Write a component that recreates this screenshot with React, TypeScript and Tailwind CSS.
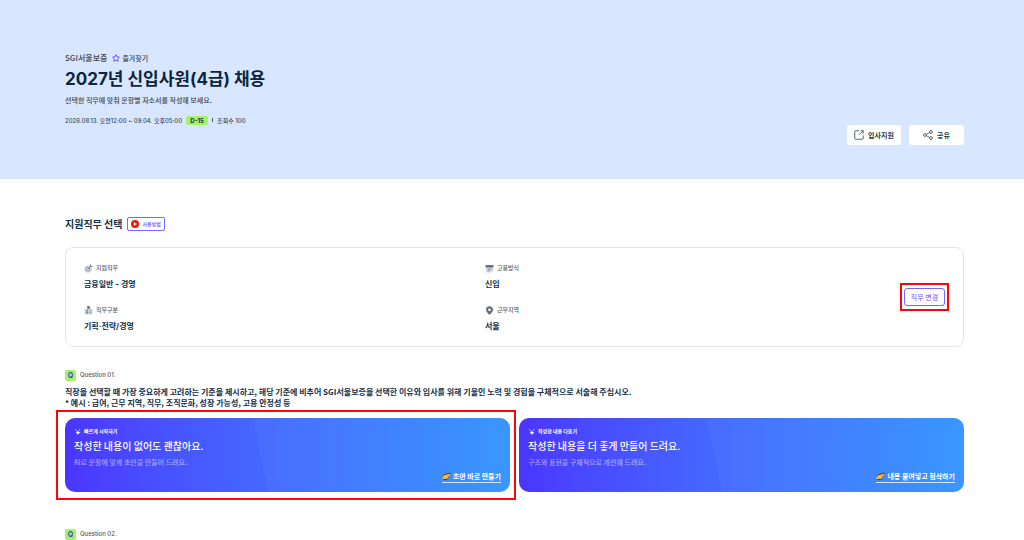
import type { ReactNode } from "react";

function StarIcon() {
  return (
    <svg className="size-2" viewBox="0 0 24 24" fill="none" stroke="#6a55ff" strokeWidth="3" strokeLinejoin="round" aria-hidden="true">
      <path d="M12 2l3.1 6.6 7.1.9-5.2 5 1.3 7.2L12 18.200l-6.300 3.500 1.300-7.200-5.200-5 7.100-.9z" />
    </svg>
  );
}

function OpenIcon() {
  return (
    <svg className="size-[10px]" viewBox="0 0 20 20" fill="none" stroke="#444b55" strokeWidth="1.7" aria-hidden="true">
      <path d="M10 1.500H3.500a2 2 0 0 0-2 2v13a2 2 0 0 0 2 2h13a2 2 0 0 0 2-2V11M13 1.500h5.500V7M18 2l-7.500 7.500" />
    </svg>
  );
}

function ShareIcon() {
  return (
    <svg className="size-[10px]" viewBox="0 0 20 20" fill="none" stroke="#444b55" strokeWidth="1.7" aria-hidden="true">
      <circle cx="3.800" cy="10" r="2.800" />
      <circle cx="16" cy="3.800" r="2.800" />
      <circle cx="16" cy="16.200" r="2.800" />
      <path d="M6.300 8.800l7.200-3.700M6.300 11.200l7.200 3.700" />
    </svg>
  );
}

function PlayIcon() {
  return (
    <svg className="size-2" viewBox="0 0 16 16" aria-hidden="true">
      <circle cx="8" cy="8" r="8" fill="#f90f12" />
      <path d="M5.500 4l6.500 4-6.500 4z" fill="#fff" />
    </svg>
  );
}

function TargetIcon() {
  return (
    <svg className="size-[9px]" viewBox="0 0 18 18" fill="none" aria-hidden="true">
      <circle cx="8" cy="10" r="7.500" fill="#d5d8df" />
      <circle cx="8" cy="10" r="4" stroke="#8b909d" strokeWidth="1.800" />
      <path d="M8 10l6-6M13 1v4h4" stroke="#737987" strokeWidth="2" />
    </svg>
  );
}

function BadgeIcon() {
  return (
    <svg className="size-[9px]" viewBox="0 0 18 18" aria-hidden="true">
      <path d="M1 5h16v12H1z" fill="#d5d8df" />
      <path d="M6.500 0h5v6h-5z" fill="#6b7280" />
      <circle cx="6" cy="9.500" r="2" fill="#7b8190" />
      <path d="M3 15c0-4 6-4 6 0zM11 9h4v1.500h-4zM11 13h4v1.500h-4z" fill="#7b8190" />
    </svg>
  );
}

function PaperIcon() {
  return (
    <svg className="size-[9px]" viewBox="0 0 18 18" aria-hidden="true">
      <path d="M2 5h14v8l-4 4H2z" fill="#d5d8df" />
      <path d="M1 2h16v5H1z" fill="#6b7280" />
      <path d="M5 9.500h8V11H5zM5 13h5v1.500H5z" fill="#7b8190" />
    </svg>
  );
}

function PinIcon() {
  return (
    <svg className="size-[9px]" viewBox="0 0 18 18" aria-hidden="true">
      <path fillRule="evenodd" d="M9 .5a7 7 0 0 1 7 7c0 4-4 7.500-7 10.500-3-3-7-6.500-7-10.500a7 7 0 0 1 7-7zm0 4.300a2.700 2.700 0 1 0 0 5.400 2.700 2.700 0 0 0 0-5.400z" fill="#686d7a" />
    </svg>
  );
}

function SparkIcon() {
  return (
    <svg className="size-[7px]" viewBox="0 0 14 14" fill="#fff" aria-hidden="true">
      <path d="M8 5l1.500 3L13 9.500 9.500 11 8 14l-1.500-3L3 9.500 6.500 8z" />
      <path d="M3 2l3 4-1 1-3-4zM12 2l1 1-3 3-1-1z" opacity=".7" />
    </svg>
  );
}

function HandIcon() {
  return (
    <svg className="h-2 w-[9px]" viewBox="0 0 18 16" aria-hidden="true">
      <path d="M1 9l4-4 5-1 6-1.500c2 0 2 2.500.5 3.500L12.500 8l.5 4-3.500 3H3l-2-2z" fill="#ffb52b" />
      <path d="M1 9l4-4 5-1 6-1.500c1.500 0 1.800 1 1.500 2M3 15h6.500l3.500-3" fill="none" stroke="#3d3222" strokeWidth="1.800" strokeLinejoin="round" />
    </svg>
  );
}

function Fact({ icon, label, value }: { icon: ReactNode; label: string; value: string }) {
  return (
    <div>
      <dt className="flex h-4 items-center gap-[3px] text-[6px] leading-4 font-medium text-[#55595f]">
        {icon}
        {label}
      </dt>
      <dd className="font-['Inter','Noto_Sans_CJK_KR',sans-serif] text-[8px] leading-4 font-bold text-[#12304a]">{value}</dd>
    </div>
  );
}

function QuestionLabel({ text }: { text: string }) {
  return (
    <div className="flex h-4 items-center gap-1 font-['Inter',sans-serif] text-[6px] leading-4 font-medium text-[#555]">
      <span className="flex size-[11px] items-center justify-center rounded-[2px] bg-[#a4f268] text-[7px] leading-[11px] font-bold text-[#4040e0]">Q</span>
      {text}
    </div>
  );
}

type BannerProps = { label: string; title: string; text: string; action: string; marked?: boolean };

function Banner({ label, title, text, action, marked = false }: BannerProps) {
  return (
    <section className="relative">
      <div className="relative flex h-[74px] flex-col overflow-hidden rounded-[10px] bg-linear-to-r from-[#4b35ff] to-[#3a97ff] px-[9px] pt-2 text-white">
        <svg className="absolute inset-0 size-full" viewBox="0 0 444 74" preserveAspectRatio="none" aria-hidden="true">
          <defs>
            <linearGradient id="sheen">
              <stop offset="0" stopColor="#fff" stopOpacity=".03" />
              <stop offset="1" stopColor="#fff" stopOpacity="0" />
            </linearGradient>
          </defs>
          <path d="M187 0h200v74H203z" fill="url(#sheen)" />
        </svg>
        <p className="relative flex h-[10px] items-center gap-[3px] text-[5px] leading-[10px] font-bold">
          <SparkIcon />
          {label}
        </p>
        <h3 className="relative text-[10px] leading-[19px] font-medium">{title}</h3>
        <p className="relative text-[7px] leading-[15px] font-medium text-white/50">{text}</p>
        <a href="#write" className="relative flex h-[13px] items-center gap-[2px] self-end border-b border-white/80 text-[7px] leading-3 font-bold">
          <HandIcon />
          {action}
        </a>
      </div>
      {marked && <div className="pointer-events-none absolute -inset-y-2 -right-[6px] -left-[9px] border-2 border-[#fb0508]" />}
    </section>
  );
}

export default function App() {
  return (
    <div className="h-screen overflow-hidden bg-white font-['Noto_Sans_CJK_KR',sans-serif] text-[#12304a]">
      <header className="flex items-end justify-between bg-[#d8e7ff] pt-[50px] pr-[60px] pb-[34px] pl-[65px]">
        <div className="pb-[17px]">
          <div className="flex h-4 items-center gap-[5px] text-[8px] font-medium text-[#3c4552]">
            <span>SGI서울보증</span>
            <button type="button" className="flex items-center gap-[2px] text-[7px]">
              <StarIcon />
              즐겨찾기
            </button>
          </div>
          <h1 className="font-['Inter','Noto_Sans_CJK_KR',sans-serif] text-[17px] leading-[26px] font-bold text-[#0b2540]">2027년 신입사원(4급) 채용</h1>
          <p className="text-[7px] leading-4 font-medium text-[#3c4552]">선택한 직무에 맞춰 문항별 자소서를 작성해 보세요.</p>
          <div className="mt-1 flex h-4 items-center gap-1 font-['Inter','Noto_Sans_CJK_KR',sans-serif] text-[6px] font-medium text-[#3c4552]">
            <span>2026.08.13. 오전12:00 ~ 09.04. 오후05:00</span>
            <span className="flex h-[9px] w-[22px] items-center justify-center rounded-[2px] bg-[#a4f268] font-bold text-[#12304a]">D-15</span>
            <span className="h-1 w-px bg-[#4b5563]" />
            <span>조회수 100</span>
          </div>
        </div>
        <div className="flex gap-2">
          <button type="button" className="flex h-5 w-[54px] items-center justify-center gap-1 rounded-[3px] bg-white text-[7px] font-bold text-[#303640]">
            <OpenIcon />
            입사지원
          </button>
          <button type="button" className="flex h-5 w-[55px] items-center justify-center gap-1 rounded-[3px] bg-white text-[7px] font-bold text-[#303640]">
            <ShareIcon />
            공유
          </button>
        </div>
      </header>

      <main className="pt-[36px] pr-[60px] pl-[65px]">
        <div className="flex h-[18px] items-center gap-[5px]">
          <h2 className="text-[10px] leading-[18px] font-bold">지원직무 선택</h2>
          <button type="button" className="flex h-[14px] items-center gap-[3px] rounded-[2px] border border-[#7866ff] px-[3px] text-[5px] font-medium text-[#6a55ff]">
            <PlayIcon />
            사용방법
          </button>
        </div>

        <section className="mt-[14px] flex items-center rounded-lg border border-[#e4e6ea] px-[18px] pt-3 pb-3">
          <dl className="mr-[18px] grid flex-1 grid-cols-2 gap-y-[10px]">
            <Fact icon={<TargetIcon />} label="지원직무" value="금융일반 - 경영" />
            <Fact icon={<PaperIcon />} label="고용방식" value="신입" />
            <Fact icon={<BadgeIcon />} label="직무구분" value="기획·전략/경영" />
            <Fact icon={<PinIcon />} label="근무지역" value="서울" />
          </dl>
          <div className="relative">
            <button type="button" className="flex h-[18px] w-[41px] items-center justify-center rounded-[3px] border border-[#7866ff] text-[7px] text-[#6a55ff]">직무 변경</button>
            <div className="pointer-events-none absolute -inset-x-[4px] -inset-y-[5px] border-2 border-[#fb0508]" />
          </div>
        </section>

        <section className="mt-5">
          <QuestionLabel text="Question 01." />
          <p className="mt-[3px] text-[8px] leading-[11px] font-bold">
            직장을 선택할 때 가장 중요하게 고려하는 기준을 제시하고, 해당 기준에 비추어 SGI서울보증을 선택한 이유와 입사를 위해 기울인 노력 및 경험을 구체적으로 서술해 주십시오.
            <br />* 예시 : 급여, 근무 지역, 직무, 조직문화, 성장 가능성, 고용 안정성 등
          </p>
          <div className="mt-[10px] grid grid-cols-2 gap-[9px]">
            <Banner marked label="빠르게 시작하기" title="작성한 내용이 없어도 괜찮아요." text="AI로 문항에 맞게 초안을 만들어 드려요." action="초안 바로 만들기" />
            <Banner label="작성한 내용 다듬기" title="작성한 내용을 더 좋게 만들어 드려요." text="구조와 표현을 구체적으로 개선해 드려요." action="내용 붙여넣고 첨삭하기" />
          </div>
        </section>

        <section className="mt-[34px]">
          <QuestionLabel text="Question 02." />
        </section>
      </main>
    </div>
  );
}
